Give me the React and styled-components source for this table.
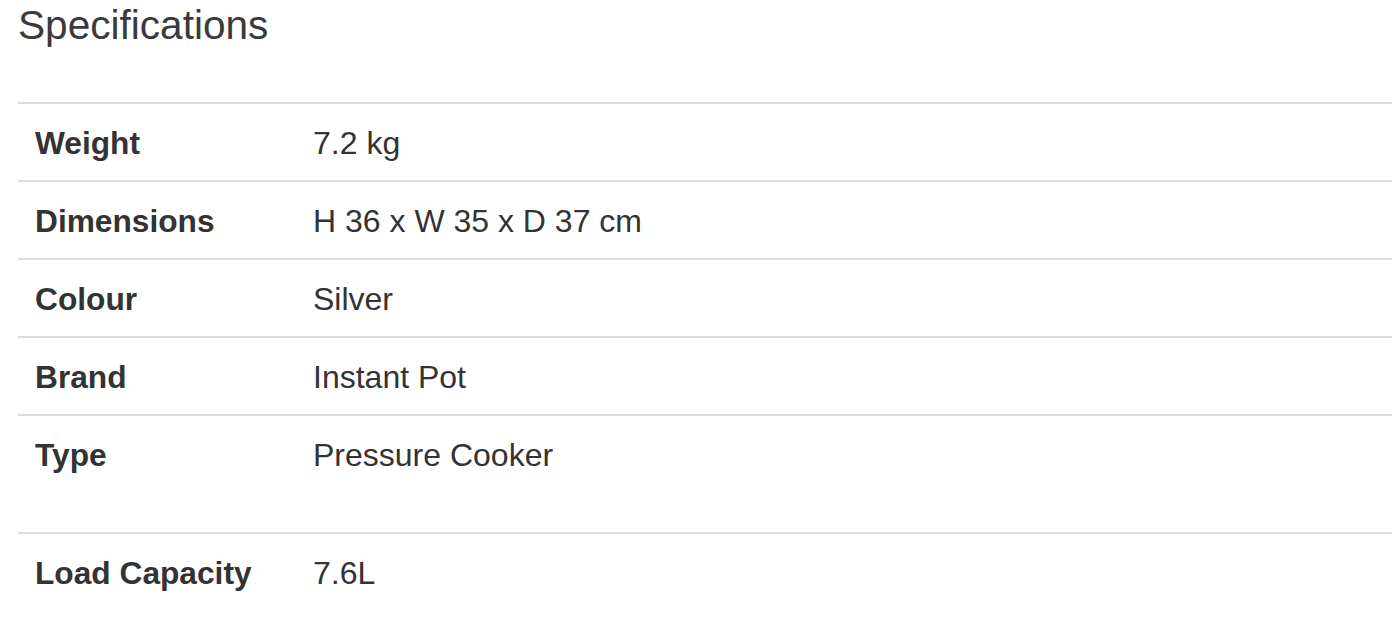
import React from 'react'
import styled, { createGlobalStyle } from 'styled-components'

const GlobalStyle = createGlobalStyle`
  html, body {
    margin: 0;
    padding: 0;
    background: #fff;
  }
  body {
    font-family: "Liberation Sans", Arial, Helvetica, sans-serif;
    color: #333;
  }
`

const specs = [
  { label: 'Weight', value: '7.2 kg' },
  { label: 'Dimensions', value: 'H 36 x W 35 x D 37 cm' },
  { label: 'Colour', value: 'Silver' },
  { label: 'Brand', value: 'Instant Pot' },
  { label: 'Type', value: 'Pressure Cooker', tall: true },
  { label: 'Load Capacity', value: '7.6L' },
]

const App = () => {
  return (
    <Wrapper>
      <GlobalStyle />
      <Title>Specifications</Title>
      <Table>
        {specs.map((s) => (
          <Row key={s.label} $tall={s.tall}>
            <Label>{s.label}</Label>
            <Value>{s.value}</Value>
          </Row>
        ))}
      </Table>
    </Wrapper>
  )
}

const Wrapper = styled.main`
  padding: 0 0 0 18px;
  width: 100%;
  box-sizing: border-box;
`

const Title = styled.h2`
  margin: 0;
  padding-top: 2px;
  font-size: 40.6px;
  line-height: 46px;
  font-weight: 400;
  color: #3a3a3a;
`

const Table = styled.div`
  margin-top: 54px;
  display: flex;
  flex-direction: column;
`

const Row = styled.div`
  display: grid;
  grid-template-columns: 295px 1fr;
  align-items: center;
  border-top: 2px solid #dcdcdc;
  height: 74px;
  padding-top: 2px;
  padding-bottom: ${(p) => (p.$tall ? '40px' : '0')};
`

const Label = styled.div`
  padding-left: 17px;
  font-size: 31.7px;
  font-weight: 700;
  color: #333;
  line-height: 40px;
`

const Value = styled.div`
  font-size: 32px;
  font-weight: 400;
  color: #333;
  line-height: 40px;
`

export default App
